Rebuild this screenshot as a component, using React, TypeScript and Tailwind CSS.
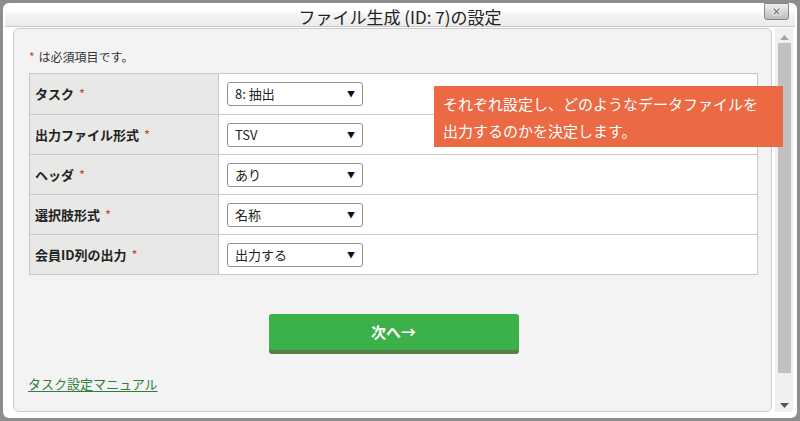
const FONT = { fontFamily: '"Noto Sans CJK JP", "Noto Sans", sans-serif' };

const rows = [
  { label: 'タスク', value: '8: 抽出' },
  { label: '出力ファイル形式', value: 'TSV' },
  { label: 'ヘッダ', value: 'あり' },
  { label: '選択肢形式', value: '名称' },
  { label: '会員ID列の出力', value: '出力する' },
];

function Select({ value }: { value: string }) {
  return (
    <div className="flex items-center justify-between w-[136px] h-[24px] border border-[#8f8f8f] rounded-[3px] bg-white pl-[7px] pr-[7px] text-[13px] text-[#222]">
      <span>{value}</span>
      <span className="text-[8px] text-[#111]">▼</span>
    </div>
  );
}

export default function App() {
  return (
    <div className="relative w-[800px] h-[421px] overflow-hidden bg-[#8d8d8d] pt-[3px] pl-[3px] pr-[3px]" style={FONT}>
      <div className="flex flex-col h-[415px] bg-white rounded-[6px]">
        {/* title bar */}
        <div className="relative h-[24px] mx-[2px] rounded-t-[8px] bg-[linear-gradient(to_bottom,#ffffff_0px,#ffffff_9px,#f6f6f6_10px,#ebebeb_100%)] border-b border-[#c9c9c9] flex items-center justify-center">
          <span className="text-[17px] text-[#222] leading-none mt-[4px]">ファイル生成 (ID: 7)の設定</span>
          <div className="absolute right-[6px] top-0 w-[25px] h-[17px] rounded-b-[3px] border border-[#858585] bg-gradient-to-b from-[#eeeeee] to-[#bdbdbd] flex items-center justify-center">
            <svg width="9" height="9" viewBox="0 0 9 9">
              <path d="M1 1 L8 8 M8 1 L1 8" stroke="#fff" strokeWidth="2.8" />
              <path d="M1.5 1.5 L7.5 7.5 M7.5 1.5 L1.5 7.5" stroke="#6d6d6d" strokeWidth="1.1" />
            </svg>
          </div>
        </div>

        <div className="flex flex-1 pl-[10px] pb-[6px] pt-[1px]">
          {/* panel */}
          <div className="flex-1 flex flex-col bg-[#f3f3f3] border border-[#cbcbcb] rounded-[6px] pl-[15px] pr-[13px]">
            <p className="mt-[20px] text-[12px] text-[#333] leading-[16px]">
              <span className="text-[#d0442b] mr-[4px]">*</span>は必須項目です。
            </p>
            <div className="mt-[8px] border border-[#c8c8c8] bg-white">
              {rows.map((r, i) => (
                <div key={r.label} className={`flex h-[40px] ${i > 0 ? 'border-t border-[#c8c8c8]' : ''}`}>
                  <div className="w-[189px] shrink-0 bg-[#e8e8e6] border-r border-[#c8c8c8] flex items-center pl-[5px] text-[13px] font-bold text-[#222]">
                    {r.label}
                    <span className="text-[#d0442b] ml-[5px] font-normal">*</span>
                  </div>
                  <div className="flex items-center pl-[8px]">
                    <Select value={r.value} />
                  </div>
                </div>
              ))}
            </div>
            <div className="flex justify-center mt-[39px]">
              <button className="w-[250px] h-[40px] rounded-[3px] bg-[#3cb14a] border-b-[4px] border-[#55804a] text-white text-[15px] font-bold">
                次へ→
              </button>
            </div>
            <a className="mt-[20px] ml-[-1px] text-[13px] text-[#2f7d3a] underline underline-offset-[2px]">タスク設定マニュアル</a>
          </div>

          {/* scrollbar */}
          <div className="w-[18px] ml-[3px] mr-[4px] bg-[#f0f0f0] flex flex-col items-center">
            <svg width="9" height="5" viewBox="0 0 9 5" className="mt-[7px]">
              <path d="M0 5 L4.5 0 L9 5 Z" fill="#a3a3a3" />
            </svg>
            <div className="w-[13px] h-[330px] mt-[3px] bg-[#c1c1c1]" />
            <svg width="9" height="5" viewBox="0 0 9 5" className="mt-auto mb-[4px]">
              <path d="M0 0 L9 0 L4.5 5 Z" fill="#555" />
            </svg>
          </div>
        </div>
      </div>

      {/* callout */}
      <div className="absolute left-[434px] top-[86px] w-[349px] h-[61px] bg-[#ec6a43] text-white text-[15px] leading-[27px] pl-[9px] pt-[4px]">
        それぞれ設定し、どのようなデータファイルを<br />出力するのかを決定します。
      </div>
    </div>
  );
}
